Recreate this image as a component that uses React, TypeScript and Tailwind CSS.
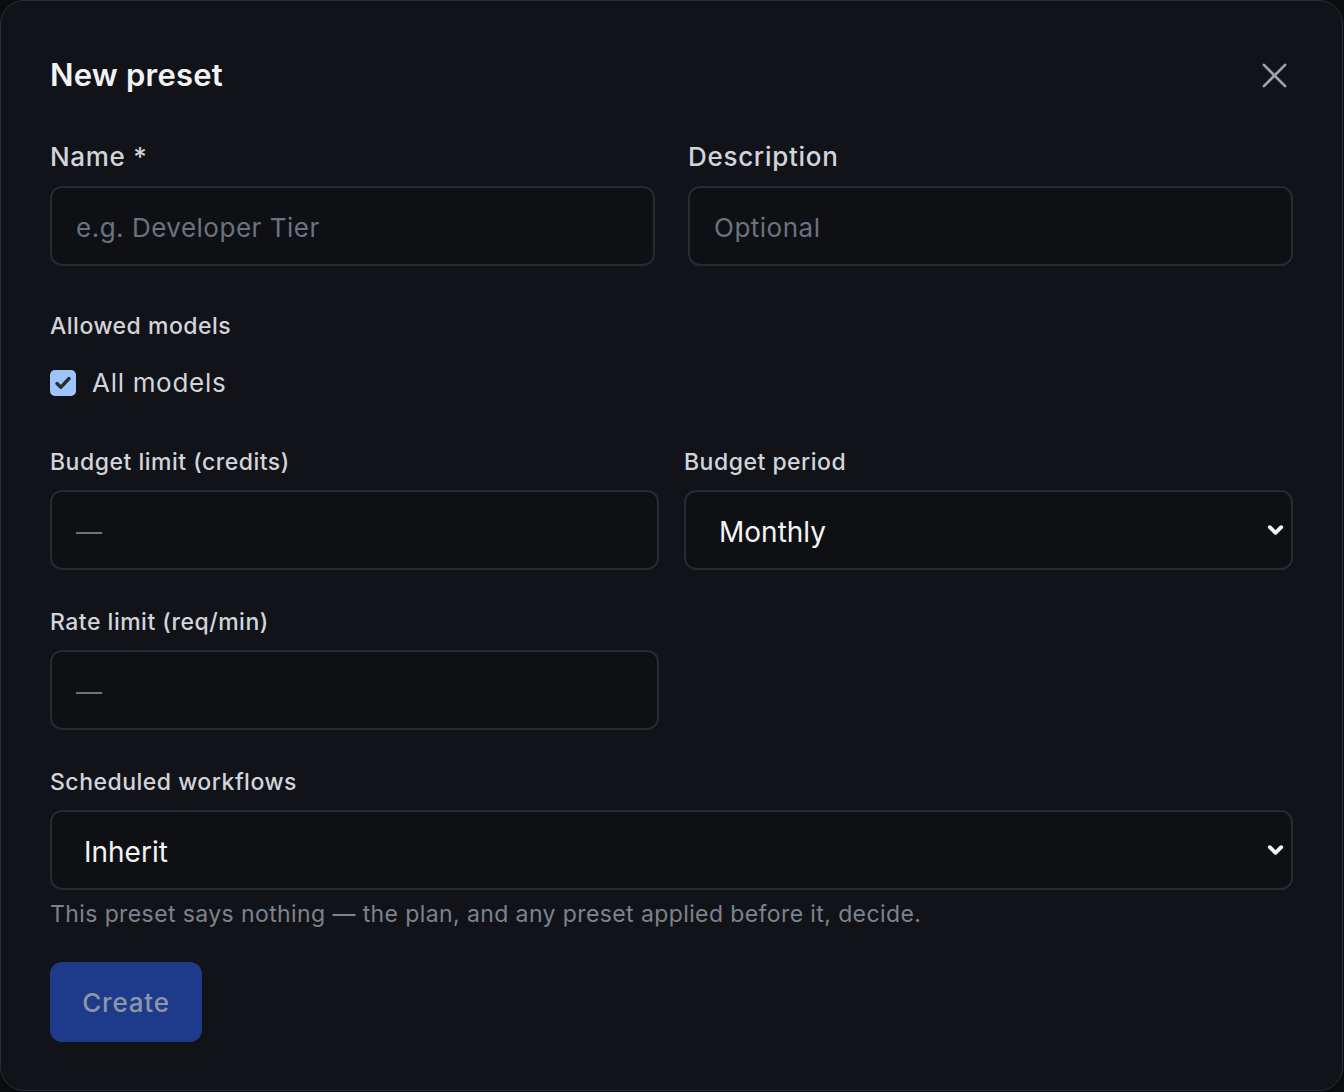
import { useState } from "react";

function Chevron() {
  return (
    <svg
      width="19"
      height="19"
      viewBox="0 0 20 20"
      fill="none"
      stroke="#f3f4f6"
      strokeWidth="4"
      strokeLinecap="round"
      strokeLinejoin="round"
      className="pointer-events-none absolute right-[8px] top-1/2 -translate-y-1/2"
    >
      <path d="M4 7l6 6 6-6" />
    </svg>
  );
}

function SelectBox({ value, width, pad }: { value: string; width: string; pad: string }) {
  return (
    <div className={`relative h-[80px] ${width}`}>
      <div
        className={`flex h-full w-full items-center rounded-[12px] border-2 border-[#262a31] bg-[#0f1014] pt-[3px] ${pad} text-[28px] text-[#f3f4f6]`}
      >
        {value}
      </div>
      <Chevron />
    </div>
  );
}

const inputCls =
  "h-[80px] rounded-[12px] border-2 border-[#262a31] bg-[#0f1014] px-[24px] pt-[2px] text-[26px] tracking-[0.5px] text-[#f3f4f6] outline-none placeholder:text-[#6b7280]";
const smallLabel = "text-[23px] font-medium leading-[28px] tracking-[0.5px] text-[#d1d5db]";
const bigLabel = "text-[26px] font-medium leading-[32px] tracking-[0.7px] text-[#d1d5db]";

export default function App() {
  const [allModels, setAllModels] = useState(true);

  return (
    <div className="h-[1092px] w-full bg-[#0b0c0f] font-['Inter',sans-serif]">
      <div className="h-[1091px] w-[1343px] rounded-[24px] border border-[#2a2d35] bg-[#111318] pl-[49px] pr-[49px] pt-[54px]">
        {/* header */}
        <div className="flex items-center justify-between">
          <h1 className="text-[31px] font-semibold leading-[40px] tracking-[0.2px] text-[#f1f3f5]">New preset</h1>
          <button className="mr-[-1px] flex h-[40px] w-[40px] items-center justify-center text-[#9ca3af]">
            <svg width="27" height="27" viewBox="0 0 28 28" stroke="currentColor" strokeWidth="2.8" strokeLinecap="round">
              <path d="M3 3l22 22M25 3L3 25" />
            </svg>
          </button>
        </div>

        {/* name + description */}
        <div className="mt-[46px] flex gap-[33px]">
          <div className="flex w-[605px] flex-col">
            <label className={bigLabel}>Name *</label>
            <input placeholder="e.g. Developer Tier" className={`mt-[13px] ${inputCls}`} />
          </div>
          <div className="flex w-[605px] flex-col">
            <label className={bigLabel}>Description</label>
            <input placeholder="Optional" className={`mt-[13px] ${inputCls}`} />
          </div>
        </div>

        {/* allowed models */}
        <div className={`mt-[46px] ${smallLabel}`}>Allowed models</div>
        <label className="mt-[30px] flex items-center gap-[16px]" onClick={() => setAllModels(!allModels)}>
          <span className="flex h-[26px] w-[26px] items-center justify-center rounded-[5px] bg-[#9ec5fb]">
            {allModels && (
              <svg width="18" height="18" viewBox="0 0 18 18" fill="none" stroke="#2b2d31" strokeWidth="3.4" strokeLinecap="round" strokeLinejoin="round">
                <path d="M3 9.5l3.8 3.8L15 4.5" />
              </svg>
            )}
          </span>
          <span className="text-[26px] leading-[26px] tracking-[0.7px] text-[#d1d5db]">All models</span>
        </label>

        {/* budget */}
        <div className="mt-[52px] flex gap-[25px]">
          <div className="flex w-[609px] flex-col">
            <label className={smallLabel}>Budget limit (credits)</label>
            <input placeholder="—" className={`mt-[14px] ${inputCls}`} />
          </div>
          <div className="flex w-[609px] flex-col">
            <label className={smallLabel}>Budget period</label>
            <div className="mt-[14px]">
              <SelectBox value="Monthly" width="w-[609px]" pad="pl-[33px]" />
            </div>
          </div>
        </div>

        {/* rate limit */}
        <div className="mt-[38px] flex w-[609px] flex-col">
          <label className={smallLabel}>Rate limit (req/min)</label>
          <input placeholder="—" className={`mt-[14px] ${inputCls}`} />
        </div>

        {/* scheduled workflows */}
        <div className="mt-[38px] flex flex-col">
          <label className={smallLabel}>Scheduled workflows</label>
          <div className="mt-[14px]">
            <SelectBox value="Inherit" width="w-[1243px]" pad="pl-[32px]" />
          </div>
          <p className="mt-[10px] text-[23px] leading-[28px] tracking-[0.4px] text-[#7d838e]">
            This preset says nothing — the plan, and any preset applied before it, decide.
          </p>
        </div>

        <button className="mt-[34px] h-[80px] w-[152px] rounded-[12px] bg-[#1e3a8a] text-[26px] font-medium tracking-[0.8px] text-[#8d96a7]">
          Create
        </button>
      </div>
    </div>
  );
}
